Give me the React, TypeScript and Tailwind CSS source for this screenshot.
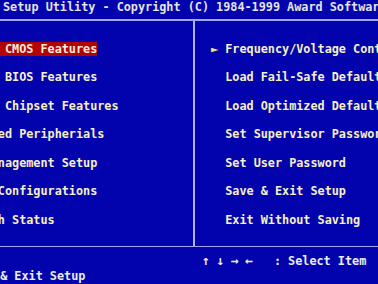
const LEFT_ITEMS = [
  'Standard CMOS Features',
  'Advanced BIOS Features',
  'Advanced Chipset Features',
  'Integrated Peripherials',
  'Power Management Setup',
  'PnP/PCI Configurations',
  'PC Health Status',
];

const RIGHT_ITEMS = [
  { label: 'Frequency/Voltage Control', sub: true },
  { label: 'Load Fail-Safe Defaults' },
  { label: 'Load Optimized Defaults' },
  { label: 'Set Supervisor Password' },
  { label: 'Set User Password' },
  { label: 'Save & Exit Setup' },
  { label: 'Exit Without Saving' },
];

export default function App() {
  return (
    <div
      className="w-[378px] h-[284px] overflow-hidden bg-[#0303ae] flex flex-col font-bold text-[11.8px] leading-[14px] whitespace-pre"
      style={{ fontFamily: '"DejaVu Sans Mono", "Liberation Mono", monospace' }}
    >
      {/* title */}
      <div className="h-[19px] pb-[4px] flex items-center text-[#e4e4e4]">
        <span className="-ml-[32.5px]">CMOS Setup Utility - Copyright (C) 1984-1999 Award Software</span>
      </div>
      <div className="h-[2px] bg-[#a4a4f4]" />

      {/* menu */}
      <div className="h-[226px] flex">
        <div className="w-[193px] overflow-hidden pt-[13.75px] flex flex-col">
          {LEFT_ITEMS.map((item, i) => (
            <div key={item} className="h-[28.5px] flex items-center">
              <span
                className={`-ml-[59px] ${i === 0 ? 'bg-[#b20404] text-[#f4ece0]' : 'text-[#f6f0c8]'}`}
              >
                {item}
              </span>
            </div>
          ))}
        </div>
        <div className="w-[2px] bg-[#b0b0f4]" />
        <div className="flex-1 overflow-hidden pt-[13.75px] pl-[16px] flex flex-col">
          {RIGHT_ITEMS.map((item) => (
            <div key={item.label} className="h-[28.5px] flex items-center text-[#f6f0c8]">
              <span className="text-[#f2e470]">{item.sub ? '► ' : '  '}</span>
              <span>{item.label}</span>
            </div>
          ))}
        </div>
      </div>
      <div className="h-[2px] bg-[#a4a4f4]" />

      {/* help */}
      <div className="pt-[6.5px] flex flex-col text-[#ececec]">
        <div className="h-[15px] flex items-center">
          <div className="w-[202px] overflow-hidden">
            <span className="-ml-[78px]">Esc : Quit</span>
          </div>
          <span className="text-[13px] tracking-[-0.6px]">↑ ↓ → ←</span>
          <span>   : Select Item</span>
        </div>
        <div className="h-[15px] flex items-center">
          <span className="-ml-[78px]">F10 : Save &amp; Exit Setup</span>
        </div>
      </div>
    </div>
  );
}
